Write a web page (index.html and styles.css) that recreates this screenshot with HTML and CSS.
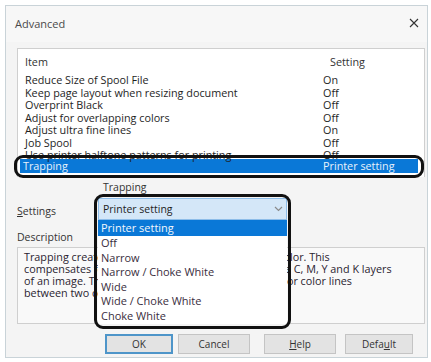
FILE: index.html
```html
<!DOCTYPE html>
<html lang="en">

<head>
  <meta charset="UTF-8">
  <title>Advanced</title>
  <link rel="stylesheet" href="styles.css">
</head>

<body>
  <div class="dialog">
    <div class="titlebar">
      <span class="title">Advanced</span>
      <svg class="close" width="10" height="10" viewBox="0 0 10 10">
        <path d="M1 1 L9 9 M9 1 L1 9" stroke="#333" stroke-width="1.1" fill="none" />
      </svg>
    </div>

    <div class="content">
      <div class="listbox">
        <div class="row head"><span>Item</span><span>Setting</span></div>
        <div class="row"><span>Reduce Size of Spool File</span><span>On</span></div>
        <div class="row"><span>Keep page layout when resizing document</span><span>Off</span></div>
        <div class="row"><span>Overprint Black</span><span>Off</span></div>
        <div class="row"><span>Adjust for overlapping colors</span><span>Off</span></div>
        <div class="row"><span>Adjust ultra fine lines</span><span>On</span></div>
        <div class="row"><span>Job Spool</span><span>Off</span></div>
        <div class="row hidden_row"><span>Use printer halftone patterns for printing</span><span>Off</span></div>
        <div class="row selected"><span>Trapping</span><span>Printer setting</span></div>
      </div>
      <div class="ring ring_row"></div>

      <div class="combo_label">Trapping</div>
      <div class="field">
        <span class="field_label"><u>S</u>ettings</span>
        <div class="combo_wrap">
          <div class="combo">
            <span>Printer setting</span>
            <svg width="9" height="6" viewBox="0 0 9 6">
              <path d="M1 1 L4.5 4.5 L8 1" stroke="#8a8a8a" stroke-width="1.2" fill="none" />
            </svg>
          </div>
          <div class="dropdown">
            <div class="option active">Printer setting</div>
            <div class="option">Off</div>
            <div class="option">Narrow</div>
            <div class="option">Narrow / Choke White</div>
            <div class="option">Wide</div>
            <div class="option">Wide / Choke White</div>
            <div class="option">Choke White</div>
          </div>
          <div class="ring ring_combo"></div>
        </div>
      </div>

      <div class="desc_label">Description</div>
      <div class="desc">
        Trapping creates an overlap between two areas of color. This<br>
        compensates for the misalignment when printing the C, M, Y and K layers<br>
        of an image. Trapping prevents the look of any gaps or color lines<br>
        between two colors.
      </div>

      <div class="buttons">
        <button class="btn default_btn">OK</button>
        <button class="btn cancel">Cancel</button>
        <button class="btn help"><u>H</u>elp</button>
        <button class="btn reset">Defa<u>u</u>lt</button>
      </div>
    </div>
  </div>
</body>

</html>
```

FILE: styles.css
```css
body {
  margin: 0;
  background-color: #fff;
  font-family: 'Open Sans', 'Noto Sans', sans-serif;
  font-size: 10.8px;
  color: #1e1e1e;
}

.dialog {
  margin: 5px;
  width: 421px;
  height: 351px;
  border: 1px solid #c9d3d8;
  background-color: #f4f4f4;
  display: flex;
  flex-direction: column;
}

.titlebar {
  height: 36px;
  display: flex;
  align-items: center;
  justify-content: space-between;
  padding: 0 8px 0 9px;
  background-color: #f7f7f7;
}

.title {
  font-size: 11px;
  color: #4a4a4a;
  margin-top: -1px;
}

.close {
  margin-top: -2px;
}

.content {
  position: relative;
  padding: 6px 2px 0 11px;
}

.listbox {
  background-color: #fff;
  border: 1px solid #cfcfcf;
  border-bottom: none;
  padding: 6px 0 4px 0;
}

.row {
  display: grid;
  grid-template-columns: 298px 1fr;
  height: 12.5px;
  line-height: 12.5px;
  padding-left: 7px;
  white-space: nowrap;
}

.row.head {
  height: 14px;
  line-height: 14px;
  margin-bottom: 5px;
  color: #333;
}

.row.head span:last-child {
  padding-left: 7px;
}

.row.hidden_row {
  height: 10px;
  line-height: 11px;
}

.row.selected {
  height: 14px;
  line-height: 14px;
  margin: 0 6px 0 2px;
  padding-left: 3px;
  background-color: #0a78d7;
  color: #e8f2fb;
}

.row.selected span:last-child {
  padding-left: 2px;
}

.ring {
  position: absolute;
  border: 3px solid #111;
  border-radius: 9px;
  pointer-events: none;
}

.ring_row {
  left: 8px;
  top: 113px;
  width: 404px;
  height: 17px;
}

.combo_label {
  margin: 3px 0 0 86px;
  height: 14px;
  line-height: 14px;
  font-size: 10.5px;
  color: #333;
}

.field {
  display: flex;
  align-items: center;
  margin-top: 4px;
}

.field_label {
  width: 81px;
  font-size: 10.5px;
  color: #333;
  padding-top: 3px;
}

.combo_wrap {
  position: relative;
  width: 189px;
}

.combo {
  height: 20px;
  border: 1px solid #8dbde9;
  background-color: #d4e7f8;
  display: flex;
  align-items: center;
  justify-content: space-between;
  padding: 0 3px 0 4px;
  font-size: 10.5px;
}

.dropdown {
  position: absolute;
  top: 22px;
  left: 0;
  width: 189px;
  background-color: #fff;
  z-index: 2;
}

.option {
  height: 14.6px;
  line-height: 14.6px;
  padding-left: 3px;
  font-size: 11px;
  color: #3a2e40;
}

.option.active {
  height: 16px;
  line-height: 16px;
  background-color: #0a78d7;
  color: #f2f7fc;
}

.ring_combo {
  left: -4px;
  top: -4px;
  width: 191px;
  height: 129px;
  z-index: 3;
}

.desc_label {
  margin-top: 10px;
  height: 14px;
  line-height: 14px;
  font-size: 10.5px;
  color: #333;
}

.desc {
  margin-top: 3px;
  height: 69px;
  border: 1px solid #cfcfcf;
  background-color: #f9f9f9;
  padding: 3px 6px;
  line-height: 12px;
  white-space: nowrap;
  overflow: hidden;
  color: #2a2330;
}

.buttons {
  display: flex;
  margin-top: 10px;
  padding-left: 88px;
}

.btn {
  height: 20px;
  padding: 0;
  font-family: inherit;
  font-size: 10px;
  color: #333;
  background-color: #e3e3e3;
  border: 1px solid #c4c4c4;
}

.default_btn {
  width: 68px;
  border: 2px solid #4e95c9;
}

.cancel {
  width: 72px;
  margin-left: 5px;
}

.help {
  width: 72px;
  margin-left: 14px;
}

.reset {
  width: 68px;
  margin-left: 9px;
}
```
